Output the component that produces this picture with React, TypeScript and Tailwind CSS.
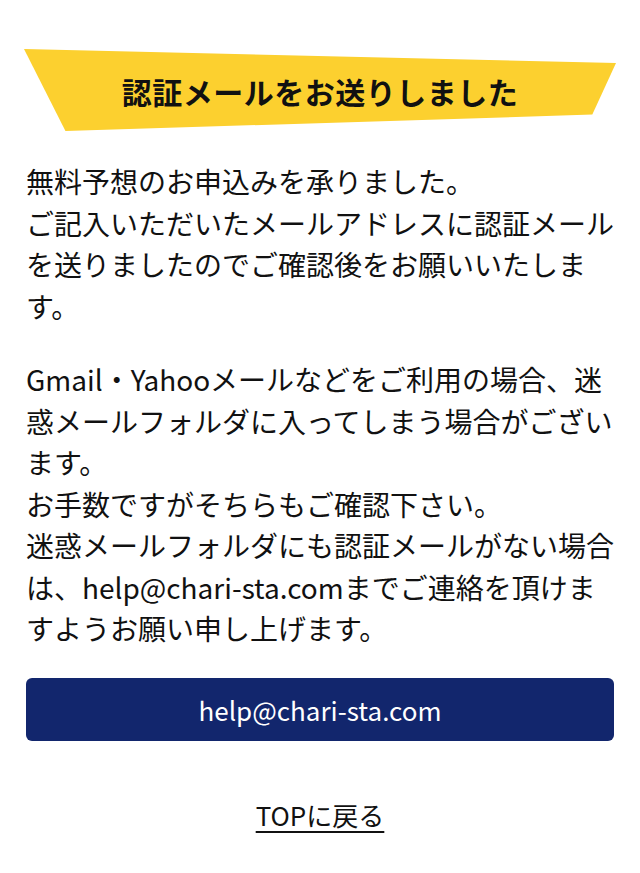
export default function App() {
  return (
    <div className="min-h-screen bg-white px-[26px] pt-[49px] text-[#111] [font-family:'Noto_Sans_CJK_JP','Noto_Sans',sans-serif]">
      {/* Slanted yellow banner */}
      <div className="-mx-[2px] flex h-[82px] items-center justify-center bg-[#fcd02f] [clip-path:polygon(0_0,100%_17%,96%_80%,7%_100%)]">
        <h1 className="pt-[3px] text-[30px] font-bold tracking-[0.5px] text-[#111]">
          認証メールをお送りしました
        </h1>
      </div>

      <div className="mt-[30px] text-[28px] leading-[41.5px] break-all">
        <p>
          無料予想のお申込みを承りました。
          <br />
          ご記入いただいたメールアドレスに認証メールを送りましたのでご確認後をお願いいたします。
        </p>
        <p className="mt-[32px]">
          Gmail・Yahooメールなどをご利用の場合、迷惑メールフォルダに入ってしまう場合がございます。
          <br />
          お手数ですがそちらもご確認下さい。
          <br />
          迷惑メールフォルダにも認証メールがない場合は、help@chari-sta.comまでご連絡を頂けますようお願い申し上げます。
        </p>
      </div>

      <a
        href="#"
        className="mt-[28px] flex h-[63px] items-center justify-center rounded-[6px] bg-[#12266d] text-[26px] text-white"
      >
        help@chari-sta.com
      </a>

      <div className="mt-[56px] flex justify-center">
        <a href="#" className="text-[26px] leading-[36px] underline underline-offset-[5px] decoration-[1.5px]">
          TOPに戻る
        </a>
      </div>
    </div>
  );
}
